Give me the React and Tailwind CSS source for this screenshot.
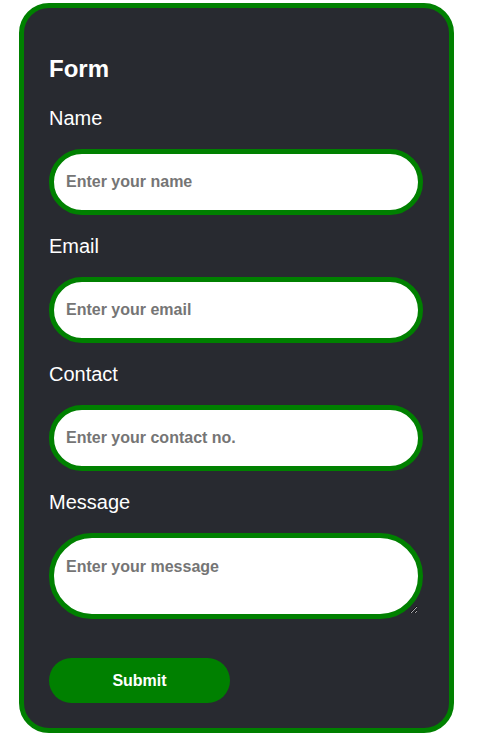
export default function App() {
  const fields = [
    { label: "Name", placeholder: "Enter your name" },
    { label: "Email", placeholder: "Enter your email" },
    { label: "Contact", placeholder: "Enter your contact no." },
  ];

  return (
    <div className="min-h-screen bg-white font-['Liberation_Sans',Arial,sans-serif]">
      <div className="ml-[19px] mt-[3px] w-[435px] rounded-[30px] border-[5px] border-[#008000] bg-[#282a30] pl-[25px] pr-[26px] pt-[47px] pb-[25px]">
        <h2 className="text-[24px] leading-[28px] font-bold text-white">Form</h2>

        {fields.map((f, i) => (
          <div key={f.label}>
            <label
              className={`block text-[20px] leading-[24px] text-white ${i === 0 ? "mt-[23px]" : "mt-[19px]"}`}
            >
              {f.label}
            </label>
            <input
              type="text"
              placeholder={f.placeholder}
              className="mt-[19px] block h-[66px] w-[374px] rounded-full border-[5px] border-[#008000] bg-white pl-[12px] pr-[11px] text-[16px] font-bold text-black outline-none placeholder:text-[#757575]"
            />
          </div>
        ))}

        <label className="block mt-[19px] text-[20px] leading-[24px] text-white">Message</label>
        <textarea
          placeholder="Enter your message"
          className="mt-[19px] block h-[86px] w-[374px] rounded-full border-[5px] border-[#008000] bg-white pl-[12px] pr-[11px] pt-[17px] text-[16px] font-bold text-black outline-none placeholder:text-[#757575]"
        />

        <button className="mt-[39px] block h-[45px] w-[181px] rounded-full bg-[#008000] text-[16px] font-bold text-white">
          Submit
        </button>
      </div>
    </div>
  );
}
